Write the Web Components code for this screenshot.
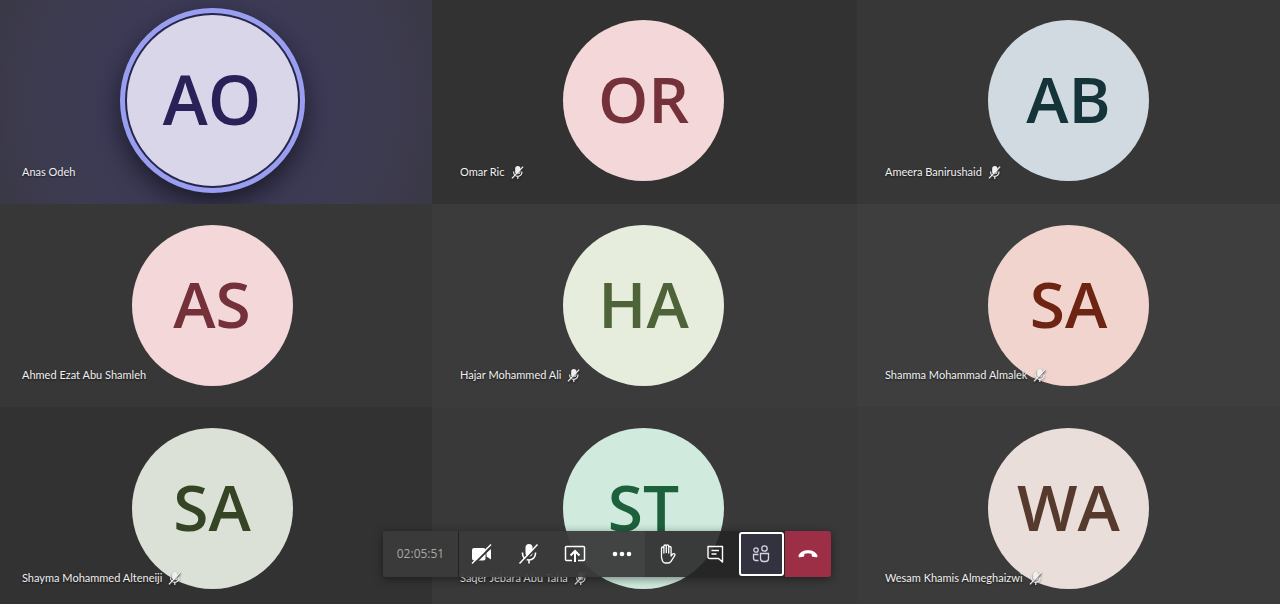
<!DOCTYPE html>
<html lang="en">
<head>
<meta charset="utf-8">
<title>Meeting</title>
<style>
  body {
    margin: 0;
    overflow: hidden;
    background: #323232;
    color: #f0f0f0;
    font-family: "Open Sans", "Noto Sans", sans-serif;
  }
</style>
</head>
<body>
<meeting-stage>
  <participant-tile initials="AO" speaking style="--fg: #292158; --disc: #d9d6ea">Anas Odeh</participant-tile>
  <participant-tile initials="OR" muted style="--tile: #323232; --fg: #75313a; --disc: #f3d7d9">Omar Ric</participant-tile>
  <participant-tile initials="AB" muted style="--tile: #373737; --fg: #14343a; --disc: #d0dae0">Ameera Banirushaid</participant-tile>
  <participant-tile initials="AS" style="--tile: #373737; --fg: #75313a; --disc: #f3d7d9">Ahmed Ezat Abu Shamleh</participant-tile>
  <participant-tile initials="HA" muted style="--tile: #3b3b3b; --fg: #4f6339; --disc: #e6eddd">Hajar Mohammed Ali</participant-tile>
  <participant-tile initials="SA" muted style="--tile: #3e3e3e; --fg: #6d2412; --disc: #f1d4ce">Shamma Mohammad Almalek</participant-tile>
  <participant-tile initials="SA" muted style="--tile: #323232; --fg: #354424; --disc: #dbe1d7">Shayma Mohammed Alteneiji</participant-tile>
  <participant-tile initials="ST" muted style="--tile: #393939; --fg: #1c613b; --disc: #d0ebde">Saqer Jebara Abu Taha</participant-tile>
  <participant-tile initials="WA" muted style="--tile: #3b3b3b; --fg: #573a2e; --disc: #e9deda">Wesam Khamis Almeghaizwi</participant-tile>
  <call-toolbar slot="toolbar" time="02:05:51">
    <call-button icon="camera-off" label="Turn camera on"></call-button>
    <call-button icon="mic-off" label="Unmute"></call-button>
    <call-button icon="share" label="Share screen"></call-button>
    <call-button icon="more" label="More actions"></call-button>
    <call-button icon="hand" label="Raise your hand"></call-button>
    <call-button icon="chat" label="Show conversation"></call-button>
    <call-button icon="people" label="Show participants" selected></call-button>
    <call-button icon="hangup" label="Hang up" danger></call-button>
  </call-toolbar>
</meeting-stage>

<script>
const icons = {
  'mic-off': `
    <rect x="7.500" y="1" width="7" height="12.500" rx="3.500" fill="currentColor"/>
    <path d="M4.500 9.500v1a6.500 6.500 0 0 0 13 0v-1M11 17v3.500" fill="none" stroke="currentColor" stroke-width="1.600"/>
    <path d="M3 21.500 21 1.500" stroke="#3a3a3a" stroke-width="2"/>
    <path d="M1.500 20.500 19.500 1.500" stroke="currentColor" stroke-width="1.500"/>`,
  'muted': `
    <rect x="7" y="0" width="9" height="14" rx="4.500" fill="currentColor"/>
    <path d="M4.500 9.500v1a7 7 0 0 0 14 0v-1M11.500 17.500V22" fill="none" stroke="currentColor" stroke-width="2"/>
    <path d="M3 22 21.500 2.500" stroke="#555" stroke-width="1.500"/>
    <path d="M1.500 21 20.500 1" stroke="currentColor" stroke-width="2"/>`,
  'camera-off': `
    <path d="M1 7a2 2 0 0 1 2-2h9.500a2 2 0 0 1 2 2v8.500a2 2 0 0 1-2 2H3a2 2 0 0 1-2-2zM15.500 9.500 20 6v10.500l-4.500-3z" fill="currentColor"/>
    <path d="M2.500 21.500 21.500 2.500" stroke="#3a3a3a" stroke-width="2"/>
    <path d="M1 20.500 20 1.500" stroke="currentColor" stroke-width="1.500"/>`,
  'share': `
    <path d="M8 17.500H2.500a1 1 0 0 1-1-1v-12a1 1 0 0 1 1-1h17a1 1 0 0 1 1 1v12a1 1 0 0 1-1 1H14" fill="none" stroke="currentColor" stroke-width="1.500"/>
    <path d="M11 19V8.500M6.500 12.500 11 8l4.500 4.500" fill="none" stroke="currentColor" stroke-width="2"/>`,
  'more': `
    <g fill="currentColor"><circle cx="4" cy="11" r="2.300"/><circle cx="11" cy="11" r="2.300"/><circle cx="18" cy="11" r="2.300"/></g>`,
  'hand': `
    <path d="M6 14.500V5.200a1.200 1.200 0 0 1 2.400 0V10 3.200a1.200 1.200 0 0 1 2.400 0V9.500 3a1.200 1.200 0 0 1 2.400 0V10 4.700a1.200 1.200 0 0 1 2.400 0V13l1.500-1.800c.6-.7 1.600-.7 2.100-.2s.4 1.100 0 1.700l-3.700 5.600a3.600 3.600 0 0 1-3 1.700h-2.700a3 3 0 0 1-2.700-1.800L6 14.500z" transform="translate(-1.500)" fill="none" stroke="currentColor" stroke-width="1.300" stroke-linejoin="round"/>`,
  'chat': `
    <path d="M4 3.500h14.500V19L14.500 15.500H5.500a1.500 1.500 0 0 1-1.500-1.500zM7.500 7.500H15M7.500 11H12.500" fill="none" stroke="currentColor" stroke-width="1.400" stroke-linejoin="round"/>`,
  'people': `
    <g fill="none" stroke="currentColor" stroke-width="1.300">
      <circle cx="6" cy="7" r="2.200"/><circle cx="14.500" cy="5.500" r="2.700"/>
      <path d="M10.500 10.500h8v5a3 3 0 0 1-3 3h-2a3 3 0 0 1-3-3zM8.500 11.500h-5V15a2.500 2.500 0 0 0 2.500 2.500h2.500"/>
    </g>`,
  'hangup': `
    <path d="M1.500 12.800C2.500 9.300 6.500 7.300 11 7.300s8.500 2 9.500 5.500c.2.900-.4 1.600-1.300 1.500l-3.300-.5c-.8-.1-1.200-.6-1.200-1.300v-1.600a12 12 0 0 0-7.400 0v1.600c0 .7-.4 1.200-1.200 1.300l-3.300.5c-.9.100-1.500-.6-1.300-1.500z" fill="currentColor"/>`
}

const svg = (name) => `<svg viewBox="0 0 22 22" aria-hidden="true">${icons[name]}</svg>`

class MeetingStage extends HTMLElement {
  constructor () {
    super()
    this.attachShadow({mode: 'open'}).innerHTML = `
      <style>
        :host {
          display: block;
          position: relative;
          height: 100vh;
          overflow: hidden;
        }
        /* the gallery bleeds a little past the window edges */
        .gallery {
          display: grid;
          grid-template-columns: 438fr 425fr 425fr;
          grid-template-rows: 205px;
          grid-auto-rows: 203px;
          margin: -1px -2px 0 -6px;
        }
        ::slotted(call-toolbar) {
          position: absolute;
          right: 66px;
          bottom: 27px;
          left: 0;
          margin: 0 auto;
        }
      </style>
      <main class='gallery'><slot></slot></main>
      <slot name='toolbar'></slot>
    `
  }
}

class ParticipantTile extends HTMLElement {
  constructor () {
    super()
    this.attachShadow({mode: 'open'})
  }

  connectedCallback () {
    this.shadowRoot.innerHTML = `
      <style>
        :host {
          box-sizing: border-box;
          display: grid;
          justify-items: center;
          padding: 21px 2px 0 0;
          overflow: hidden;
          background: var(--tile);
        }
        :host([speaking]) {
          background: radial-gradient(ellipse 58% 130% at 50% 50%, #3c3a58 30%, #3d3b50 65%, #393844 100%);
        }
        .avatar, .label { grid-area: 1 / 1; }
        .avatar {
          box-sizing: border-box;
          display: grid;
          place-items: center;
          width: 161px;
          height: 161px;
          padding-bottom: 3px;
          border-radius: 50%;
          background: var(--disc);
          color: var(--fg);
          font-size: 64px;
          font-weight: 600;
          line-height: 64px;
        }
        :host([speaking]) .avatar {
          width: 171px;
          height: 171px;
          margin-top: -5px;
          font-size: 68px;
          box-shadow: 0 0 0 2px #26264a, 0 0 0 7px #9a9ef0, 0 10px 24px 7px rgba(20, 20, 30, .8);
        }
        .label {
          display: flex;
          align-items: center;
          align-self: end;
          justify-self: start;
          gap: 6px;
          padding: 0 0 24px 28px;
          font-family: Lato, "Open Sans", sans-serif;
          font-size: 11px;
          line-height: 16px;
          text-shadow: 0 1px 2px rgba(0, 0, 0, .6);
        }
        svg {
          width: 13px;
          height: 13px;
          filter: drop-shadow(0 1px 1px rgba(0, 0, 0, .5));
        }
      </style>
      <div class='avatar'>${this.getAttribute('initials')}</div>
      <div class='label'><slot></slot>${this.hasAttribute('muted') ? svg('muted') : ''}</div>
    `
  }
}

class CallToolbar extends HTMLElement {
  constructor () {
    super()
    this.attachShadow({mode: 'open'})
  }

  connectedCallback () {
    this.shadowRoot.innerHTML = `
      <style>
        :host {
          display: flex;
          width: 448px;
          height: 46px;
          border-radius: 3px;
          overflow: hidden;
          background: linear-gradient(90deg, rgba(58, 58, 58, .95) 262px, rgba(35, 35, 35, .88) 262px);
          box-shadow: 0 2px 10px rgba(0, 0, 0, .45);
        }
        time {
          width: 75px;
          border-right: 1px solid #222;
          color: #a8a8a8;
          font-size: 12px;
          line-height: 46px;
          text-align: center;
        }
        .actions {
          display: flex;
          flex: 1;
        }
      </style>
      <time>${this.getAttribute('time')}</time>
      <div class='actions'><slot></slot></div>
    `
  }
}

class CallButton extends HTMLElement {
  constructor () {
    super()
    this.attachShadow({mode: 'open'})
  }

  connectedCallback () {
    this.shadowRoot.innerHTML = `
      <style>
        :host {
          display: flex;
          flex: 1;
        }
        button {
          display: grid;
          flex: 1;
          place-items: center;
          padding: 0;
          border: 0;
          background: none;
          color: #fff;
        }
        :host([selected]) button {
          margin: 1px;
          border: 2px solid #fff;
          border-radius: 3px;
          background: #33323f;
          color: #d5d5ea;
        }
        :host([danger]) button { background: #9c2f45; }
        svg {
          width: 22px;
          height: 22px;
        }
      </style>
      <button type='button' aria-label='${this.getAttribute('label')}'>${svg(this.getAttribute('icon'))}</button>
    `
  }
}

customElements.define('meeting-stage', MeetingStage)
customElements.define('participant-tile', ParticipantTile)
customElements.define('call-toolbar', CallToolbar)
customElements.define('call-button', CallButton)
</script>
</body>
</html>
